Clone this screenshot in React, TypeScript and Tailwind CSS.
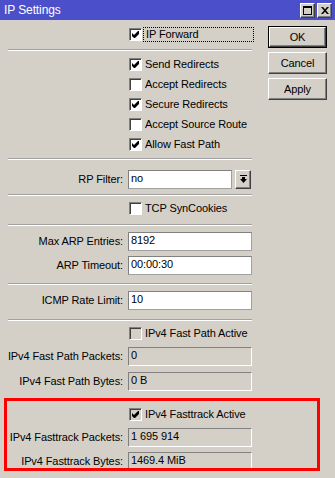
import React from 'react';

const sunken = 'border border-t-[#808080] border-l-[#808080] border-r-white border-b-white';
const raised = 'border border-t-white border-l-white border-r-[#404040] border-b-[#404040] shadow-[inset_-1px_-1px_0_#808080]';

function CheckMark() {
  return (
    <svg width="7" height="7" viewBox="0 0 7 7">
      <polygon points="0,2 2,4 6,0 7,0 7,3 3,7 2,7 0,5" fill="#000" />
    </svg>
  );
}

function Box({ checked, disabled }: { checked?: boolean; disabled?: boolean }) {
  return (
    <span
      className={`flex h-[13px] w-[13px] shrink-0 items-center justify-center ${sunken} shadow-[inset_1px_1px_0_#404040] ${
        disabled ? 'bg-[#d4d0c8]' : 'bg-white'
      }`}
    >
      {checked && <CheckMark />}
    </span>
  );
}

function CheckRow({ label, checked, disabled, className = '' }: { label: string; checked?: boolean; disabled?: boolean; className?: string }) {
  return (
    <div className={`flex h-[20px] items-center pl-[129px] ${className}`}>
      <Box checked={checked} disabled={disabled} />
      <span className="ml-[3px]">{label}</span>
    </div>
  );
}

function Field({ label, value, readOnly, className = '' }: { label: string; value: string; readOnly?: boolean; className?: string }) {
  return (
    <div className={`flex h-[20px] items-center ${className}`}>
      <div className="w-[123px] text-right">{label}</div>
      <div
        className={`ml-[5px] flex h-[19px] w-[124px] items-center pl-[2px] pb-[1px] ${
          readOnly ? `${sunken} bg-[#d4d0c8]` : 'border border-[#808080] border-b-[#a0a0a0] border-r-[#a0a0a0] bg-white'
        }`}
      >
        {value}
      </div>
    </div>
  );
}

function Sep({ className = '' }: { className?: string }) {
  return <div className={`ml-[8px] w-[244px] border-t border-b border-t-[#a0a0a0] border-b-white ${className}`} />;
}

function Btn({ children, isDefault }: { children: React.ReactNode; isDefault?: boolean }) {
  return (
    <div className={`h-[22px] w-[59px] ${isDefault ? 'border border-black' : ''}`}>
      <div className={`flex h-full w-full items-center justify-center ${raised}`}>{children}</div>
    </div>
  );
}

export default function App() {
  return (
    <div className="relative h-[478px] w-[335px] overflow-hidden bg-[#d4d0c8] font-['Liberation_Sans',Arial,sans-serif] text-[11px] tracking-[-0.1px] text-black">
      {/* title bar */}
      <div className="flex h-[20px] items-center bg-[#4b4fc9] pl-[4px] pr-[3px] text-white">
        <span className="text-[12px]">IP Settings</span>
        <div className="ml-auto flex gap-[2px]">
          <div className={`flex h-[15px] w-[15px] items-center justify-center bg-[#d4d0c8] ${raised}`}>
            <svg width="9" height="9" viewBox="0 0 9 9">
              <rect x="0.5" y="0.5" width="8" height="8" fill="none" stroke="#000" />
              <rect x="0" y="0" width="9" height="2" fill="#000" />
            </svg>
          </div>
          <div className={`flex h-[15px] w-[15px] items-center justify-center bg-[#d4d0c8] ${raised}`}>
            <svg width="8" height="7" viewBox="0 0 8 7">
              <path d="M0 0h2l2 2.2L6 0h2L5 3.5 8 7H6L4 4.8 2 7H0l3-3.5z" fill="#000" />
            </svg>
          </div>
        </div>
      </div>

      <div className="flex">
        <div className="w-[260px]">
          <div className="mt-[4px] flex h-[20px] items-center pl-[129px]">
            <Box checked />
            <span className="ml-[1px] flex h-[15px] w-[111px] items-center border border-dotted border-black pl-[2px]">IP Forward</span>
          </div>
          <Sep className="mt-[5px]" />
          <CheckRow label="Send Redirects" checked className="mt-[3px]" />
          <CheckRow label="Accept Redirects" />
          <CheckRow label="Secure Redirects" checked />
          <CheckRow label="Accept Source Route" />
          <CheckRow label="Allow Fast Path" checked />
          <Sep className="mt-[4px]" />

          <div className="mt-[9px] flex h-[20px] items-center">
            <div className="w-[123px] text-right">RP Filter:</div>
            <div className="ml-[5px] flex h-[19px] w-[104px] items-center border border-[#808080] border-b-[#a0a0a0] border-r-[#a0a0a0] bg-white pb-[1px] pl-[2px]">
              no
            </div>
            <div className={`ml-[3px] flex h-[19px] w-[16px] items-center justify-center bg-[#d4d0c8] ${raised}`}>
              <svg width="7" height="8" viewBox="0 0 7 8">
                <rect x="0" y="0" width="7" height="1" fill="#000" />
                <rect x="2" y="2" width="3" height="2" fill="#000" />
                <polygon points="0,4 7,4 3.5,8" fill="#000" />
              </svg>
            </div>
          </div>
          <Sep className="mt-[5px]" />
          <CheckRow label="TCP SynCookies" className="mt-[2px]" />
          <Sep className="mt-[6px]" />

          <Field label="Max ARP Entries:" value="8192" className="mt-[5px]" />
          <Field label="ARP Timeout:" value="00:00:30" className="mt-[4px]" />
          <Sep className="mt-[8px]" />
          <Field label="ICMP Rate Limit:" value="10" className="mt-[5px]" />
          <Sep className="mt-[9px]" />

          <CheckRow label="IPv4 Fast Path Active" disabled className="mt-[2px]" />
          <Field label="IPv4 Fast Path Packets:" value="0" readOnly className="mt-[3px]" />
          <Field label="IPv4 Fast Path Bytes:" value="0 B" readOnly className="mt-[5px]" />

          <CheckRow label="IPv4 Fasttrack Active" checked disabled className="mt-[13px]" />
          <Field label="IPv4 Fasttrack Packets:" value="1 695 914" readOnly className="mt-[3px]" />
          <Field label="IPv4 Fasttrack Bytes:" value="1469.4 MiB" readOnly className="mt-[4px]" />
        </div>

        <div className="ml-[8px] mt-[6px] flex flex-col gap-[4px]">
          <Btn isDefault>OK</Btn>
          <Btn>Cancel</Btn>
          <Btn>Apply</Btn>
        </div>
      </div>

      {/* annotation overlay */}
      <div className="absolute left-[4px] top-[398px] h-[73px] w-[316px] border-[3px] border-[#ff0000]" />
    </div>
  );
}
